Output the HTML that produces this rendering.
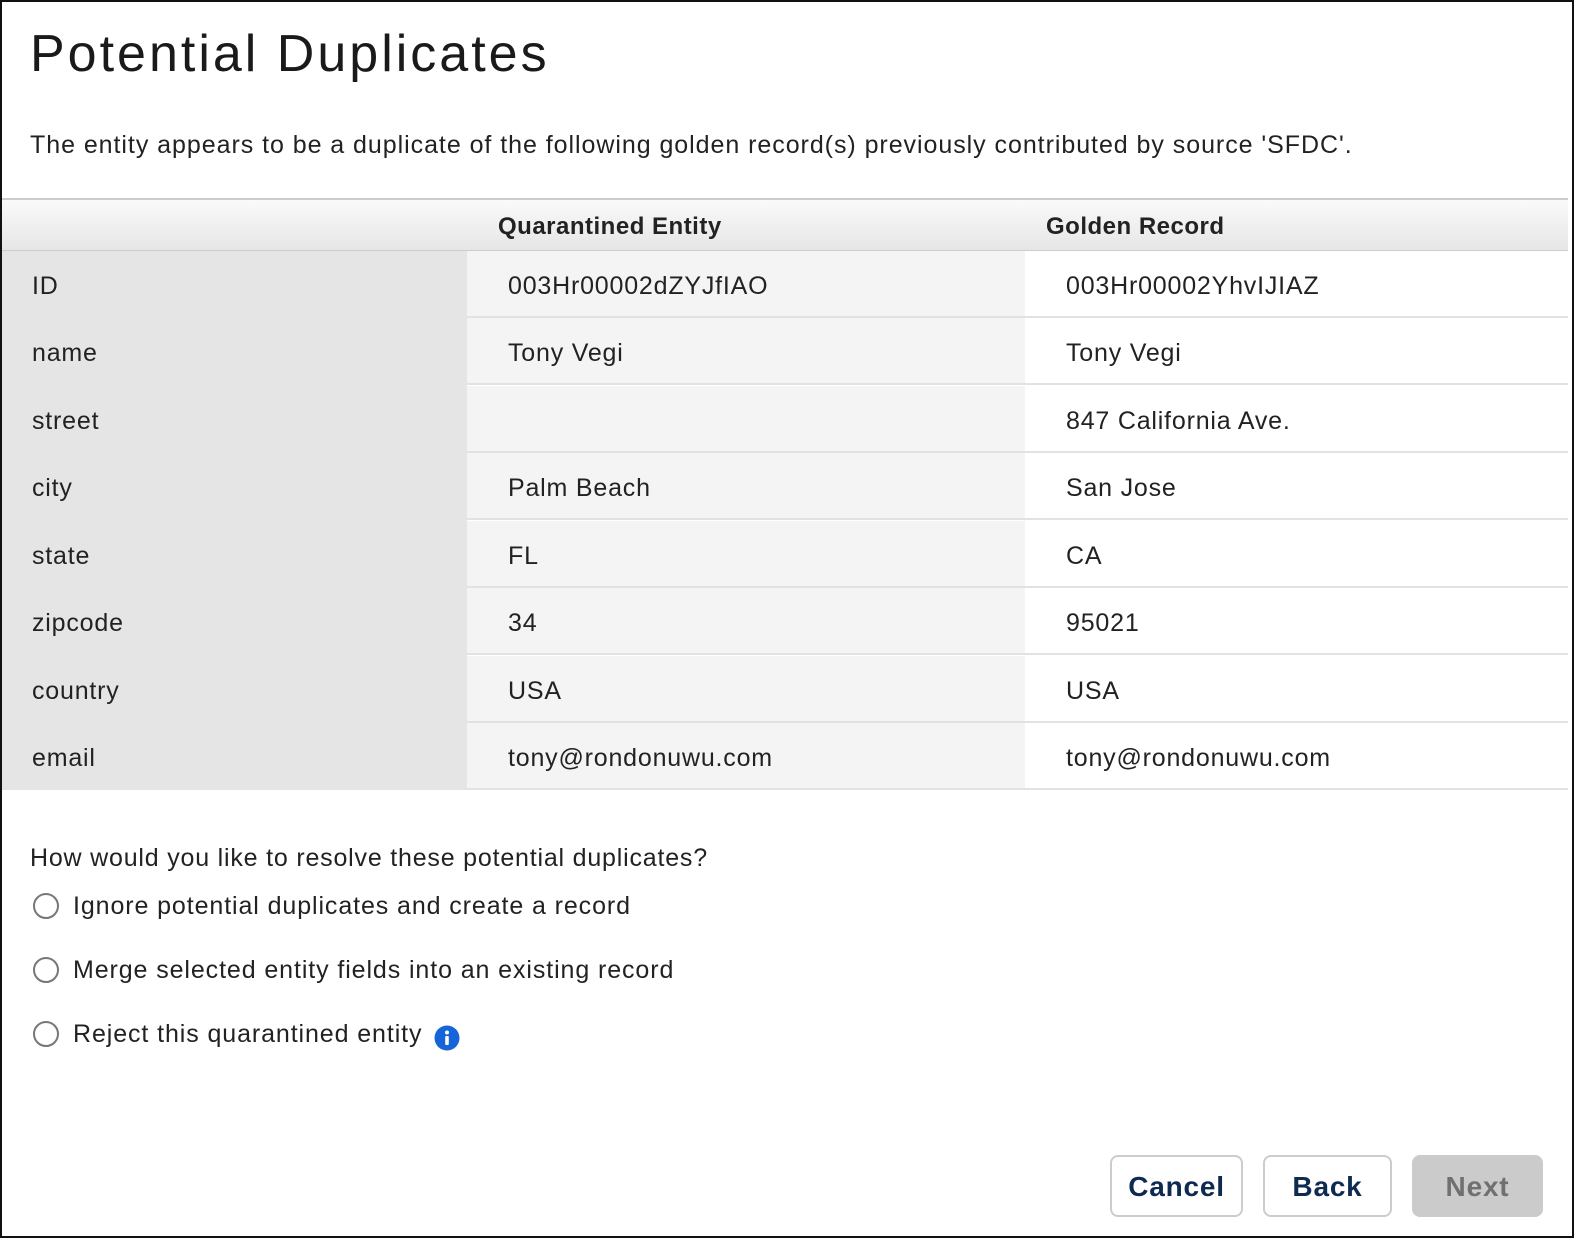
<!DOCTYPE html>
<html><head><style>
body{margin:0;width:1574px;height:1238px;overflow:hidden;background:#fff;font-family:"Liberation Sans",sans-serif;color:#222}
.frame{position:absolute;left:0;top:0;width:1570px;height:1234px;border:2px solid #111;z-index:5;pointer-events:none}
h1{position:absolute;left:30px;top:24px;margin:0;font-weight:400;font-size:52px;color:#1a1a1a;letter-spacing:3px}
.desc{position:absolute;left:30px;top:131px;font-size:25px;letter-spacing:0.95px}
.hdr{position:absolute;left:0;top:198px;width:1568px;height:50px;background:linear-gradient(#fafafa,#e6e6e6);border-top:2px solid #ccc;border-bottom:2px solid #ccc;font-weight:bold;font-size:24px;letter-spacing:0.5px}
.hdr span{position:absolute;top:13px}
.lab{position:absolute;left:0;top:251px;width:467px;height:539px;background:#e5e5e5}
.row{position:absolute;left:0;width:1568px;height:66px;font-size:25px;letter-spacing:0.8px}
.row div{position:absolute;top:0;height:67px;line-height:70px;box-sizing:border-box}
.c1{left:0;width:467px;padding-left:32px}
.c2{left:467px;width:558px;background:#f4f4f4;padding-left:41px;border-bottom:2px solid #e2e2e2}
.c3{left:1025px;width:543px;background:#fff;padding-left:41px;border-bottom:2px solid #e2e2e2}
.q{position:absolute;left:30px;top:844px;font-size:25px;letter-spacing:0.8px}
.opt{position:absolute;left:33px;font-size:25px;letter-spacing:0.9px}
.opt i{display:inline-block;width:22px;height:22px;border:2px solid #777;border-radius:50%;vertical-align:-5px;margin-right:14px}
.btn{position:absolute;top:1155px;height:62px;box-sizing:border-box;border:2px solid #ccc;border-radius:8px;font-weight:bold;font-size:28px;color:#0e2a50;text-align:center;line-height:60px;letter-spacing:0.8px}
</style></head><body>
<div class="frame"></div>
<h1>Potential Duplicates</h1>
<div class="desc">The entity appears to be a duplicate of the following golden record(s) previously contributed by source 'SFDC'.</div>
<div class="hdr"><span style="left:498px">Quarantined Entity</span><span style="left:1046px">Golden Record</span></div>
<div class="lab"></div>
<div class="row" style="top:251px"><div class="c1">ID</div><div class="c2">003Hr00002dZYJfIAO</div><div class="c3">003Hr00002YhvIJIAZ</div></div>
<div class="row" style="top:318px"><div class="c1">name</div><div class="c2">Tony Vegi</div><div class="c3">Tony Vegi</div></div>
<div class="row" style="top:386px"><div class="c1">street</div><div class="c2"></div><div class="c3">847 California Ave.</div></div>
<div class="row" style="top:453px"><div class="c1">city</div><div class="c2">Palm Beach</div><div class="c3">San Jose</div></div>
<div class="row" style="top:521px"><div class="c1">state</div><div class="c2">FL</div><div class="c3">CA</div></div>
<div class="row" style="top:588px"><div class="c1">zipcode</div><div class="c2">34</div><div class="c3">95021</div></div>
<div class="row" style="top:656px"><div class="c1">country</div><div class="c2">USA</div><div class="c3">USA</div></div>
<div class="row" style="top:723px"><div class="c1">email</div><div class="c2">tony@rondonuwu.com</div><div class="c3">tony@rondonuwu.com</div></div>
<div class="q">How would you like to resolve these potential duplicates?</div>
<div class="opt" style="top:892px"><i></i>Ignore potential duplicates and create a record</div>
<div class="opt" style="top:956px"><i></i>Merge selected entity fields into an existing record</div>
<div class="opt" style="top:1020px"><i></i>Reject this quarantined entity <svg width="26" height="26" style="vertical-align:-9px;margin-left:4px" viewBox="0 0 26 26"><circle cx="13" cy="13" r="12.5" fill="#1565d8"/><circle cx="13" cy="7.5" r="2" fill="#fff"/><rect x="11.2" y="11" width="3.6" height="9" rx="1" fill="#fff"/></svg></div>
<div class="btn" style="left:1110px;width:133px">Cancel</div>
<div class="btn" style="left:1263px;width:129px">Back</div>
<div class="btn" style="left:1412px;width:131px;background:#cbcbcb;border-color:#cbcbcb;color:#707070">Next</div>
</body></html>
